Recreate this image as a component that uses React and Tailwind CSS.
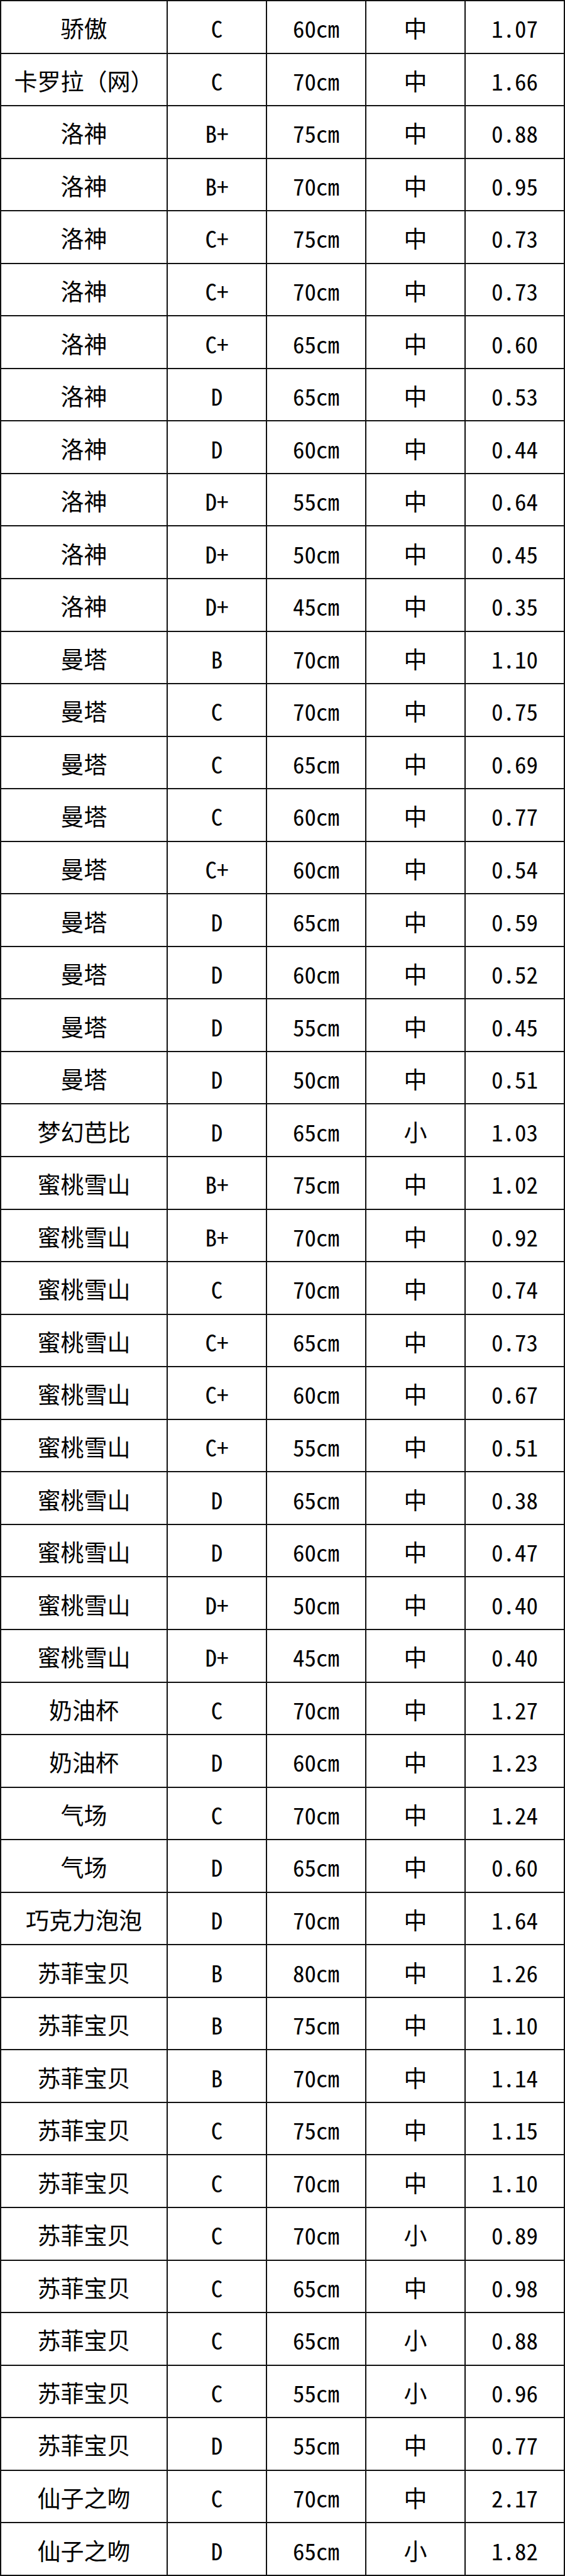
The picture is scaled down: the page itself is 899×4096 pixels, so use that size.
const rows = [
  ["骄傲", "C", "60cm", "中", "1.07"],
  ["卡罗拉（网）", "C", "70cm", "中", "1.66"],
  ["洛神", "B+", "75cm", "中", "0.88"],
  ["洛神", "B+", "70cm", "中", "0.95"],
  ["洛神", "C+", "75cm", "中", "0.73"],
  ["洛神", "C+", "70cm", "中", "0.73"],
  ["洛神", "C+", "65cm", "中", "0.60"],
  ["洛神", "D", "65cm", "中", "0.53"],
  ["洛神", "D", "60cm", "中", "0.44"],
  ["洛神", "D+", "55cm", "中", "0.64"],
  ["洛神", "D+", "50cm", "中", "0.45"],
  ["洛神", "D+", "45cm", "中", "0.35"],
  ["曼塔", "B", "70cm", "中", "1.10"],
  ["曼塔", "C", "70cm", "中", "0.75"],
  ["曼塔", "C", "65cm", "中", "0.69"],
  ["曼塔", "C", "60cm", "中", "0.77"],
  ["曼塔", "C+", "60cm", "中", "0.54"],
  ["曼塔", "D", "65cm", "中", "0.59"],
  ["曼塔", "D", "60cm", "中", "0.52"],
  ["曼塔", "D", "55cm", "中", "0.45"],
  ["曼塔", "D", "50cm", "中", "0.51"],
  ["梦幻芭比", "D", "65cm", "小", "1.03"],
  ["蜜桃雪山", "B+", "75cm", "中", "1.02"],
  ["蜜桃雪山", "B+", "70cm", "中", "0.92"],
  ["蜜桃雪山", "C", "70cm", "中", "0.74"],
  ["蜜桃雪山", "C+", "65cm", "中", "0.73"],
  ["蜜桃雪山", "C+", "60cm", "中", "0.67"],
  ["蜜桃雪山", "C+", "55cm", "中", "0.51"],
  ["蜜桃雪山", "D", "65cm", "中", "0.38"],
  ["蜜桃雪山", "D", "60cm", "中", "0.47"],
  ["蜜桃雪山", "D+", "50cm", "中", "0.40"],
  ["蜜桃雪山", "D+", "45cm", "中", "0.40"],
  ["奶油杯", "C", "70cm", "中", "1.27"],
  ["奶油杯", "D", "60cm", "中", "1.23"],
  ["气场", "C", "70cm", "中", "1.24"],
  ["气场", "D", "65cm", "中", "0.60"],
  ["巧克力泡泡", "D", "70cm", "中", "1.64"],
  ["苏菲宝贝", "B", "80cm", "中", "1.26"],
  ["苏菲宝贝", "B", "75cm", "中", "1.10"],
  ["苏菲宝贝", "B", "70cm", "中", "1.14"],
  ["苏菲宝贝", "C", "75cm", "中", "1.15"],
  ["苏菲宝贝", "C", "70cm", "中", "1.10"],
  ["苏菲宝贝", "C", "70cm", "小", "0.89"],
  ["苏菲宝贝", "C", "65cm", "中", "0.98"],
  ["苏菲宝贝", "C", "65cm", "小", "0.88"],
  ["苏菲宝贝", "C", "55cm", "小", "0.96"],
  ["苏菲宝贝", "D", "55cm", "中", "0.77"],
  ["仙子之吻", "C", "70cm", "中", "2.17"],
  ["仙子之吻", "D", "65cm", "小", "1.82"],
];

export default function App() {
  return (
    <div className="w-[899px] bg-white">
      <div className="grid grid-cols-[265px_158px_158px_158px_158px] auto-rows-[83.55px] border-t-2 border-l-2 border-[#111] font-['Noto_Sans_CJK_SC',sans-serif] text-[37px] leading-none text-black">
        {rows.map((r, i) =>
          r.map((c, j) =>
            j === 0 ? (
              <div
                key={i + "-" + j}
                className="flex items-center justify-center border-r-2 border-b-2 border-[#111] pt-[4px] whitespace-nowrap"
              >
                {c}
              </div>
            ) : (
              <div
                key={i + "-" + j}
                className="flex items-center justify-center border-r-2 border-b-2 border-[#111] pt-[4px] whitespace-nowrap [font-feature-settings:'hwid']"
              >
                {c}
              </div>
            )
          )
        )}
      </div>
    </div>
  );
}
